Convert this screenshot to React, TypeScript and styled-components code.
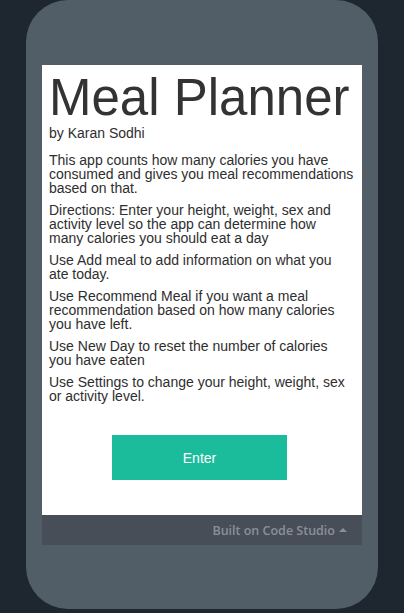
import React from "react";
import styled, { createGlobalStyle } from "styled-components";

const Global = createGlobalStyle`
  html, body { margin: 0; padding: 0; background: #1e2630; }
  body { font-family: "Liberation Sans", Arial, sans-serif; }
`;

const Page = styled.div`
  width: 404px;
  height: 613px;
  background: #1e2630;
  overflow: hidden;
  padding-left: 26px;
  box-sizing: border-box;
`;

const Phone = styled.div`
  width: 352px;
  height: 609px;
  background: #515e68;
  border-radius: 42px;
  padding: 65px 16px 0;
  box-sizing: border-box;
  display: flex;
  flex-direction: column;
`;

const Screen = styled.div`
  width: 320px;
  height: 450px;
  background: #ffffff;
  box-sizing: border-box;
  padding: 0 8px 0 7px;
  display: flex;
  flex-direction: column;
  color: #2e2e2e;
`;

const Title = styled.h1`
  margin: 7px 0 0 0;
  font-size: 51px;
  font-weight: normal;
  line-height: 52px;
  white-space: nowrap;
  color: #333333;
`;

const Byline = styled.div`
  font-size: 14px;
  line-height: 14px;
  margin-top: 2px;
`;

const Paragraphs = styled.div`
  display: flex;
  flex-direction: column;
  gap: 8px;
  margin-top: 13px;
`;

const Para = styled.p`
  margin: 0;
  font-size: 14px;
  line-height: 14px;
`;

const ButtonRow = styled.div`
  display: flex;
  justify-content: center;
  margin-top: 32px;
  padding-right: 4px;
`;

const EnterButton = styled.button`
  width: 175px;
  height: 45px;
  border: none;
  background: #1abc9c;
  color: #ffffff;
  font-family: "Liberation Sans", Arial, sans-serif;
  font-size: 14px;
  padding: 0;
  cursor: pointer;
`;

const Footer = styled.div`
  width: 320px;
  height: 30px;
  background: #474e58;
  display: flex;
  align-items: center;
  justify-content: flex-end;
  padding-right: 15px;
  box-sizing: border-box;
  gap: 4px;
  color: #8a9099;
  font-family: "Open Sans", "Lato", sans-serif;
  font-weight: 600;
  font-size: 12.5px;
`;

const Caret = styled.span`
  width: 0;
  height: 0;
  border-left: 4px solid transparent;
  border-right: 4px solid transparent;
  border-bottom: 4px solid #8a9099;
  margin-top: -1px;
`;

const paragraphs = [
  "This app counts how many calories you have consumed and gives you meal recommendations based on that.",
  "Directions: Enter your height, weight, sex and activity level so the app can determine how many calories you should eat a day",
  "Use Add meal to add information on what you ate today.",
  "Use Recommend Meal if you want a meal recommendation based on how many calories you have left.",
  "Use New Day to reset the number of calories you have eaten",
  "Use Settings to change your height, weight, sex or activity level.",
];

export default function App() {
  return (
    <>
      <Global />
      <Page>
        <Phone>
          <Screen>
            <Title>Meal Planner</Title>
            <Byline>by Karan Sodhi</Byline>
            <Paragraphs>
              {paragraphs.map((p) => (
                <Para key={p}>{p}</Para>
              ))}
            </Paragraphs>
            <ButtonRow>
              <EnterButton>Enter</EnterButton>
            </ButtonRow>
          </Screen>
          <Footer>
            <span>Built on Code Studio</span>
            <Caret />
          </Footer>
        </Phone>
      </Page>
    </>
  );
}
